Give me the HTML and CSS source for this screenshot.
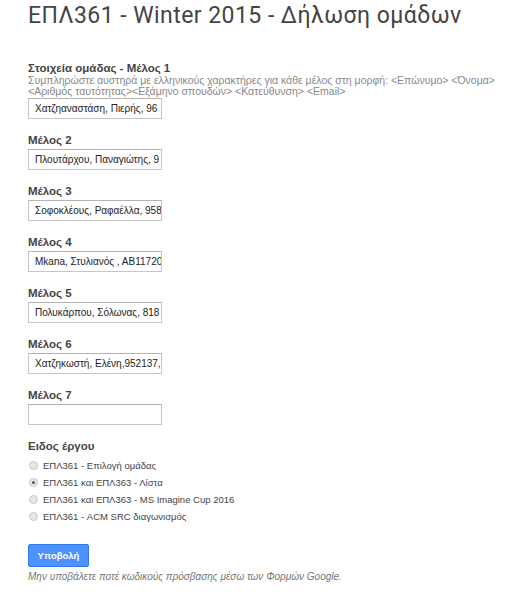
FILE: index.html
```html
<!DOCTYPE html>
<html lang="el">
<head>
<meta charset="utf-8">
<title>ΕΠΛ361 - Winter 2015 - Δήλωση ομάδων</title>
<link rel="stylesheet" href="styles.css">
</head>
<body>
<div class="form">
  <h1 class="title">ΕΠΛ361 - Winter 2015 - Δήλωση ομάδων</h1>
  <div class="item first">
    <div class="label">Στοιχεία ομάδας - Μέλος 1</div>
    <div class="help">Συμπληρώστε αυστηρά με ελληνικούς χαρακτήρες για κάθε μέλος στη μορφή: &lt;Επώνυμο&gt; &lt;Όνομα&gt; &lt;Αριθμός ταυτότητας&gt;&lt;Εξάμηνο σπουδών&gt; &lt;Κατεύθυνση&gt; &lt;Email&gt;</div>
    <div class="input"><span>Χατζηαναστάση, Πιερής, 96</span></div>
  </div>
  <div class="item">
    <div class="label">Μέλος 2</div>
    <div class="input"><span>Πλουτάρχου, Παναγιώτης, 9</span></div>
  </div>
  <div class="item">
    <div class="label">Μέλος 3</div>
    <div class="input"><span>Σοφοκλέους, Ραφαέλλα, 958</span></div>
  </div>
  <div class="item">
    <div class="label">Μέλος 4</div>
    <div class="input"><span>Μkana, Στυλιανός , ΑΒ11720</span></div>
  </div>
  <div class="item">
    <div class="label">Μέλος 5</div>
    <div class="input"><span>Πολυκάρπου, Σόλωνας, 818</span></div>
  </div>
  <div class="item">
    <div class="label">Μέλος 6</div>
    <div class="input"><span>Χατζηκωστή, Ελένη,952137,</span></div>
  </div>
  <div class="item">
    <div class="label">Μέλος 7</div>
    <div class="input"><span></span></div>
  </div>
  <div class="item radios-item">
    <div class="label">Ειδος έργου</div>
    <ul class="radios">
      <li><span class="radio"></span>ΕΠΛ361 - Επιλογή ομάδας</li>
      <li><span class="radio checked"></span>ΕΠΛ361 και ΕΠΛ363 - Λίστα</li>
      <li><span class="radio"></span>ΕΠΛ361 και ΕΠΛ363 - MS Imagine Cup 2016</li>
      <li><span class="radio"></span>ΕΠΛ361 - ACM SRC διαγωνισμός</li>
    </ul>
  </div>
  <div class="submit"><span class="button">Υποβολή</span></div>
  <div class="footer">Μην υποβάλετε ποτέ κωδικούς πρόσβασης μέσω των Φορμών Google.</div>
</div>
</body>
</html>
```

FILE: styles.css
```css
html, body {
  margin: 0;
  padding: 0;
  background: #fff;
}
body {
  font-family: "Liberation Sans", Arial, sans-serif;
  color: #444;
}
.form {
  padding: 3px 0 0 28px;
}
.title {
  font-family: Roboto, "Liberation Sans", sans-serif;
  font-weight: 400;
  font-size: 23px;
  letter-spacing: 0.45px;
  line-height: 26px;
  color: #444;
  margin: 0 0 32px 0;
  white-space: nowrap;
}
.item {
  margin-bottom: 14px;
}
.label {
  font-size: 11.5px;
  font-weight: bold;
  line-height: 14px;
  color: #444;
  margin-bottom: 2px;
}
.first .label {
  margin-bottom: 0;
}
.help {
  font-size: 10.5px;
  line-height: 11px;
  color: #888;
  width: 480px;
  margin-bottom: 1px;
}
.input {
  box-sizing: border-box;
  width: 134px;
  height: 21px;
  border: 1px solid #c6c6c6;
  border-top-color: #b3b3b3;
  background: #fff;
  overflow: hidden;
  white-space: nowrap;
  padding: 0 0 0 6px;
  font-size: 10px;
  line-height: 19px;
  color: #222;
}
.radios-item {
  margin-top: 14px;
  margin-bottom: 0;
}
.radios-item .label {
  margin-bottom: 4px;
}
.radios {
  list-style: none;
  margin: 0;
  padding: 0;
}
.radios li {
  display: flex;
  align-items: center;
  height: 17px;
  font-size: 9.5px;
  color: #444;
  white-space: nowrap;
}
.radio {
  box-sizing: border-box;
  width: 9px;
  height: 9px;
  border-radius: 50%;
  border: 1px solid #c8c8c8;
  background: #e6e6e6;
  margin: 0 5px 0 1px;
  display: inline-flex;
  align-items: center;
  justify-content: center;
}
.radio.checked::after {
  content: "";
  width: 3px;
  height: 3px;
  border-radius: 50%;
  background: #555;
}
.submit {
  margin-top: 19px;
}
.button {
  display: inline-block;
  box-sizing: border-box;
  width: 61px;
  height: 23px;
  background: #4d90fe;
  border: 1px solid #3079ed;
  border-radius: 2px;
  color: #fff;
  font-weight: bold;
  font-size: 9.5px;
  line-height: 21px;
  text-align: center;
}
.footer {
  margin-top: 3px;
  font-size: 10px;
  font-style: italic;
  color: #777;
  line-height: 14px;
}
```
